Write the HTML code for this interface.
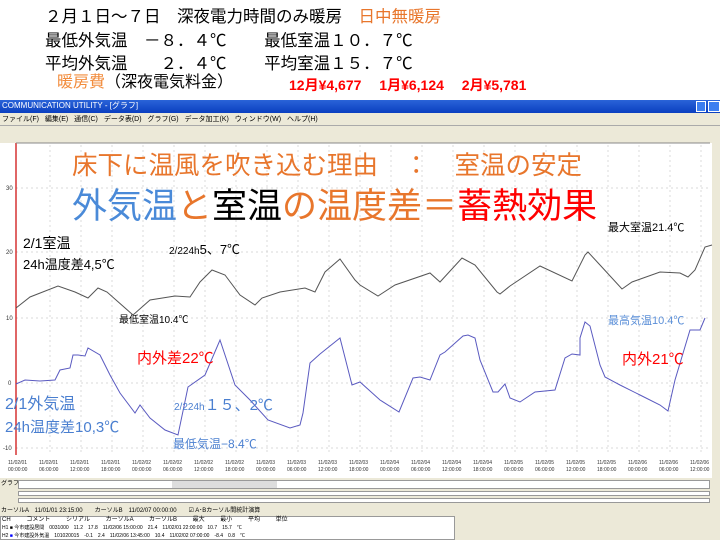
<!DOCTYPE html>
<html><head><meta charset="utf-8"><style>
*{margin:0;padding:0;box-sizing:border-box}
body{width:720px;height:540px;overflow:hidden;background:#fff;position:relative;font-family:"Liberation Sans","Noto Sans CJK JP",sans-serif}
.t{position:absolute;white-space:nowrap;line-height:1}
</style></head><body>
<div class="t" style="left:45px;top:9px;font-size:16.5px;color:#000">２月１日～７日　深夜電力時間のみ暖房　<span style="color:#e8762c">日中無暖房</span></div>
<div class="t" style="left:45px;top:33px;font-size:16.5px;color:#000">最低外気温　－８．４℃　　 最低室温１０．７℃</div>
<div class="t" style="left:45px;top:56px;font-size:16.5px;color:#000">平均外気温　　２．４℃　　 平均室温１５．７℃</div>
<div class="t" style="left:57px;top:75px;font-size:16px;color:#000"><span style="color:#f28c3c">暖房費</span>（深夜電気料金）</div>
<div class="t" style="left:289px;top:78px;font-size:14px;font-weight:bold;color:#f00">12月¥4,677　 1月¥6,124　 2月¥5,781</div>

<div style="position:absolute;left:0;top:100px;width:720px;height:13px;background:linear-gradient(#2a63d8,#0a3fc0);"></div>
<div class="t" style="left:2px;top:102px;font-size:8px;color:#fff">COMMUNICATION UTILITY - [グラフ]</div>
<div style="position:absolute;left:696px;top:101px;width:10px;height:11px;background:#3c7ef0;border:1px solid #fff"></div>
<div style="position:absolute;left:708px;top:101px;width:12px;height:11px;background:#3c7ef0;border:1px solid #fff"></div>
<div style="position:absolute;left:0;top:113px;width:720px;height:30px;background:#ece9d8"></div>
<div class="t" style="left:2px;top:116px;font-size:7px;color:#000;word-spacing:4px">ファイル(F) 編集(E) 通信(C) データ表(D) グラフ(G) データ加工(K) ウィンドウ(W) ヘルプ(H)</div>
<div style="position:absolute;left:0;top:125px;width:720px;height:1px;background:#aaa"></div>
<div style="position:absolute;left:0;top:143px;width:712px;height:312px;background:#fff"></div>
<div style="position:absolute;left:712px;top:143px;width:8px;height:340px;background:#ece9d8"></div>

<svg style="position:absolute;left:0;top:0" width="720" height="540">
<g stroke="#ccc" stroke-width="0.7" stroke-dasharray="2,3">
<line x1="16" y1="188" x2="710" y2="188"/><line x1="16" y1="252" x2="710" y2="252"/><line x1="16" y1="318" x2="710" y2="318"/><line x1="16" y1="383" x2="710" y2="383"/><line x1="16" y1="448" x2="710" y2="448"/>
<line x1="50" y1="145" x2="50" y2="455"/><line x1="81" y1="145" x2="81" y2="455"/><line x1="112" y1="145" x2="112" y2="455"/><line x1="143" y1="145" x2="143" y2="455"/><line x1="174" y1="145" x2="174" y2="455"/><line x1="205" y1="145" x2="205" y2="455"/><line x1="236" y1="145" x2="236" y2="455"/><line x1="267" y1="145" x2="267" y2="455"/><line x1="298" y1="145" x2="298" y2="455"/><line x1="329" y1="145" x2="329" y2="455"/><line x1="360" y1="145" x2="360" y2="455"/><line x1="391" y1="145" x2="391" y2="455"/><line x1="422" y1="145" x2="422" y2="455"/><line x1="453" y1="145" x2="453" y2="455"/><line x1="484" y1="145" x2="484" y2="455"/><line x1="515" y1="145" x2="515" y2="455"/><line x1="546" y1="145" x2="546" y2="455"/><line x1="577" y1="145" x2="577" y2="455"/><line x1="608" y1="145" x2="608" y2="455"/><line x1="639" y1="145" x2="639" y2="455"/><line x1="670" y1="145" x2="670" y2="455"/><line x1="701" y1="145" x2="701" y2="455"/>
</g>
<line x1="16" y1="143" x2="16" y2="455" stroke="#c00" stroke-width="1.2"/>
<line x1="16" y1="143" x2="710" y2="143" stroke="#888" stroke-width="1"/>
<g font-size="6" fill="#333"><text x="6" y="190">30</text><text x="6" y="254">20</text><text x="6" y="320">10</text><text x="8" y="385">0</text><text x="3" y="450">-10</text></g>
<polyline fill="none" stroke="#555" stroke-width="1" points="16,308 30,297 58,286 75,292 88,298 98,288 107,292 133,315 150,300 175,296 190,297 200,282 212,270 225,275 240,295 255,305 262,298 280,292 305,288 315,292 325,272 340,259 355,280 360,285 378,296 395,285 430,273 440,282 462,258 475,265 497,292 500,294 510,286 540,266 572,281 585,255 588,252 600,265 622,289 632,282 660,272 680,273 688,277 695,270 705,247 712,245"/>
<polyline fill="none" stroke="#5a5ac0" stroke-width="1" points="16,384 25,380 40,381 55,380 60,370 70,368 73,355 78,355 85,356 88,348 100,355 110,375 120,393 135,413 140,405 150,418 165,430 178,435 188,387 205,375 220,340 235,385 250,400 268,420 290,428 300,425 303,413 310,363 320,354 340,338 352,385 360,382 380,400 399,412 413,378 420,377 430,380 440,355 445,352 463,336 468,335 475,338 480,360 493,392 498,392 505,384 510,398 520,402 535,392 555,390 560,374 565,358 572,354 580,355 580,338 585,322 590,326 600,365 605,377 620,385 640,395 660,405 668,411 675,380 690,330 700,330 705,318"/>
<g font-size="5" fill="#333">
<text x="8" y="464">11/02/01</text><text x="8" y="471">00:00:00</text>
<text x="39" y="464">11/02/01</text><text x="39" y="471">06:00:00</text>
<text x="70" y="464">11/02/01</text><text x="70" y="471">12:00:00</text>
<text x="101" y="464">11/02/01</text><text x="101" y="471">18:00:00</text>
<text x="132" y="464">11/02/02</text><text x="132" y="471">00:00:00</text>
<text x="163" y="464">11/02/02</text><text x="163" y="471">06:00:00</text>
<text x="194" y="464">11/02/02</text><text x="194" y="471">12:00:00</text>
<text x="225" y="464">11/02/02</text><text x="225" y="471">18:00:00</text>
<text x="256" y="464">11/02/03</text><text x="256" y="471">00:00:00</text>
<text x="287" y="464">11/02/03</text><text x="287" y="471">06:00:00</text>
<text x="318" y="464">11/02/03</text><text x="318" y="471">12:00:00</text>
<text x="349" y="464">11/02/03</text><text x="349" y="471">18:00:00</text>
<text x="380" y="464">11/02/04</text><text x="380" y="471">00:00:00</text>
<text x="411" y="464">11/02/04</text><text x="411" y="471">06:00:00</text>
<text x="442" y="464">11/02/04</text><text x="442" y="471">12:00:00</text>
<text x="473" y="464">11/02/04</text><text x="473" y="471">18:00:00</text>
<text x="504" y="464">11/02/05</text><text x="504" y="471">00:00:00</text>
<text x="535" y="464">11/02/05</text><text x="535" y="471">06:00:00</text>
<text x="566" y="464">11/02/05</text><text x="566" y="471">12:00:00</text>
<text x="597" y="464">11/02/05</text><text x="597" y="471">18:00:00</text>
<text x="628" y="464">11/02/06</text><text x="628" y="471">00:00:00</text>
<text x="659" y="464">11/02/06</text><text x="659" y="471">06:00:00</text>
<text x="690" y="464">11/02/06</text><text x="690" y="471">12:00:00</text>
</g>
</svg>

<div class="t" style="left:72px;top:154px;font-size:25.5px;color:#e8762c">床下に温風を吹き込む理由　：　室温の安定</div>
<div class="t" style="left:72px;top:189px;font-size:35px;color:#e8762c"><span style="color:#4a8ad8">外気温</span>と<span style="color:#000">室温</span>の温度差＝<span style="color:#f00">蓄熱効果</span></div>
<div class="t" style="left:23px;top:236px;font-size:14px;color:#000">2/1室温</div>
<div class="t" style="left:23px;top:258px;font-size:13px;color:#000">24h温度差4,5℃</div>
<div class="t" style="left:169px;top:243px;font-size:13px;color:#000"><span style="font-size:10px">2/224h</span>5、7℃</div>
<div class="t" style="left:119px;top:316px;font-size:10px;color:#000">最低室温10.4℃</div>
<div class="t" style="left:608px;top:223px;font-size:11px;color:#000">最大室温21.4℃</div>
<div class="t" style="left:137px;top:351px;font-size:15px;color:#f00">内外差22℃</div>
<div class="t" style="left:622px;top:352px;font-size:15px;color:#f00">内外21℃</div>
<div class="t" style="left:608px;top:316px;font-size:11px;color:#5b8fd8">最高気温10.4℃</div>
<div class="t" style="left:5px;top:397px;font-size:16px;color:#4a7fd0">2/1外気温</div>
<div class="t" style="left:5px;top:420px;font-size:15px;color:#4a7fd0">24h温度差10,3℃</div>
<div class="t" style="left:174px;top:398px;font-size:15px;color:#4a7fd0"><span style="font-size:10px">2/224h</span>１５、2℃</div>
<div class="t" style="left:173px;top:438px;font-size:12px;color:#4a7fd0">最低気温−8.4℃</div>

<div style="position:absolute;left:0;top:478px;width:720px;height:62px;background:#ece9d8"></div>
<div class="t" style="left:1px;top:481px;font-size:6px">グラフ</div>
<div style="position:absolute;left:18px;top:480px;width:692px;height:9px;background:#fff;border:1px solid #999"></div>
<div style="position:absolute;left:172px;top:481px;width:105px;height:7px;background:#ddd"></div>
<div style="position:absolute;left:18px;top:491px;width:692px;height:5px;background:#fff;border:1px solid #999"></div>
<div style="position:absolute;left:18px;top:498px;width:692px;height:5px;background:#fff;border:1px solid #999"></div>
<div class="t" style="left:1px;top:508px;font-size:6px">カーソルA　11/01/01 23:15:00　　カーソルB　11/02/07 00:00:00　　☑ A･Bカーソル間統計演算</div>
<div style="position:absolute;left:0;top:516px;width:455px;height:24px;background:#fff;border:1px solid #999"></div>
<div class="t" style="left:2px;top:517px;font-size:6px;word-spacing:14px">CH コメント シリアル カーソルA カーソルB 最大 最小 平均 単位</div>
<div class="t" style="left:2px;top:526px;font-size:5px">H1 ■ 今市建設居間　0031000　11.2　17.8　11/02/06 15:00:00　21.4　11/02/01 22:00:00　10.7　15.7　℃</div>
<div class="t" style="left:2px;top:534px;font-size:5px">H2 <span style="color:#00f">■</span> 今市建設外気温　101020015　-0.1　2.4　11/02/06 13:45:00　10.4　11/02/02 07:00:00　-8.4　0.8　℃</div>
</body></html>
